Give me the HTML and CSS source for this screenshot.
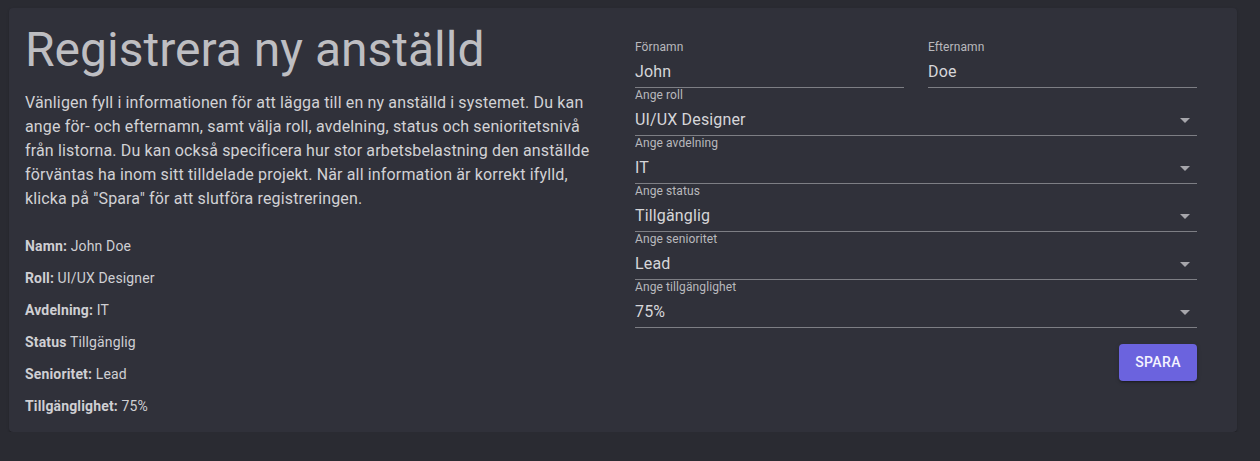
FILE: index.html
```html
<!DOCTYPE html>
<html lang="sv">
<head>
<meta charset="utf-8">
<title>Registrera ny anställd</title>
<link rel="stylesheet" href="styles.css">
</head>
<body>
<div class="card">
  <div class="col-left">
    <h1 class="title">Registrera ny anställd</h1>
    <p class="intro">Vänligen fyll i informationen för att lägga till en ny anställd i systemet. Du kan ange för- och efternamn, samt välja roll, avdelning, status och senioritetsnivå från listorna. Du kan också specificera hur stor arbetsbelastning den anställde förväntas ha inom sitt tilldelade projekt. När all information är korrekt ifylld, klicka på "Spara" för att slutföra registreringen.</p>
    <div class="details">
      <p class="detail"><b>Namn:</b> John Doe</p>
      <p class="detail"><b>Roll:</b> UI/UX Designer</p>
      <p class="detail"><b>Avdelning:</b> IT</p>
      <p class="detail"><b>Status</b> Tillgänglig</p>
      <p class="detail"><b>Senioritet:</b> Lead</p>
      <p class="detail"><b>Tillgänglighet:</b> 75%</p>
    </div>
  </div>
  <div class="col-right">
    <div class="name-row">
      <div class="field">
        <label class="label">Förnamn</label>
        <div class="input"><span class="value">John</span></div>
      </div>
      <div class="field">
        <label class="label">Efternamn</label>
        <div class="input"><span class="value">Doe</span></div>
      </div>
    </div>
    <div class="field">
      <label class="label">Ange roll</label>
      <div class="input select"><span class="value">UI/UX Designer</span><svg class="arrow" viewBox="0 0 24 24"><path d="M7 10l5 5 5-5z"/></svg></div>
    </div>
    <div class="field">
      <label class="label">Ange avdelning</label>
      <div class="input select"><span class="value">IT</span><svg class="arrow" viewBox="0 0 24 24"><path d="M7 10l5 5 5-5z"/></svg></div>
    </div>
    <div class="field">
      <label class="label">Ange status</label>
      <div class="input select"><span class="value">Tillgänglig</span><svg class="arrow" viewBox="0 0 24 24"><path d="M7 10l5 5 5-5z"/></svg></div>
    </div>
    <div class="field">
      <label class="label">Ange senioritet</label>
      <div class="input select"><span class="value">Lead</span><svg class="arrow" viewBox="0 0 24 24"><path d="M7 10l5 5 5-5z"/></svg></div>
    </div>
    <div class="field">
      <label class="label">Ange tillgänglighet</label>
      <div class="input select"><span class="value">75%</span><svg class="arrow" viewBox="0 0 24 24"><path d="M7 10l5 5 5-5z"/></svg></div>
    </div>
    <div class="actions">
      <button class="btn" type="button">Spara</button>
    </div>
  </div>
</div>
</body>
</html>
```

FILE: styles.css
```css
html, body {
  margin: 0;
  padding: 0;
  background: #2a2b32;
  font-family: Roboto, "Noto Sans", sans-serif;
}

.card {
  margin: 8px 0 0 9px;
  width: 1228px;
  box-sizing: border-box;
  padding: 16px 40px 16px 16px;
  background: #30313a;
  border-radius: 4px;
  box-shadow: 0 2px 1px -1px rgba(0,0,0,0.2), 0 1px 1px 0 rgba(0,0,0,0.14), 0 1px 3px 0 rgba(0,0,0,0.12);
  display: flex;
  gap: 24px;
}

.col-left {
  width: 586px;
  flex: none;
}

.col-right {
  flex: 1;
  padding-top: 16px;
}

.title {
  margin: -2px 0 13px;
  font-size: 48px;
  font-weight: 400;
  line-height: 56px;
  color: #bebec2;
  letter-spacing: 0;
  white-space: nowrap;
}

.intro {
  margin: 0;
  font-size: 16px;
  line-height: 24px;
  color: #d2d2d5;
  letter-spacing: 0.15px;
}

.details {
  margin-top: 25px;
}

.detail {
  margin: 12px 0 0;
  font-size: 14px;
  line-height: 20px;
  color: #cfcfd3;
  letter-spacing: 0.15px;
}

.detail b {
  font-weight: 700;
}

.name-row {
  display: flex;
  gap: 24px;
}

.name-row .field {
  flex: 1;
}

.field {
  height: 48px;
  display: flex;
  flex-direction: column;
}

.label {
  height: 16px;
  font-size: 12px;
  line-height: 14px;
  color: #b9b9bd;
  letter-spacing: 0.1px;
}

.input {
  position: relative;
  height: 32px;
  box-sizing: border-box;
  padding: 4px 0 5px;
  border-bottom: 1px solid #7d7e84;
  display: flex;
  align-items: center;
}

.value {
  font-size: 16px;
  line-height: 23px;
  color: #d6d6d9;
  letter-spacing: 0.15px;
}

.arrow {
  position: absolute;
  right: 0;
  top: 4px;
  width: 24px;
  height: 24px;
  fill: #a6a6ab;
}

.actions {
  display: flex;
  justify-content: flex-end;
  margin-top: 16px;
}

.btn {
  font-family: Roboto, "Noto Sans", sans-serif;
  font-size: 14px;
  font-weight: 500;
  line-height: 25px;
  letter-spacing: 0.4px;
  text-transform: uppercase;
  color: #f4f3ff;
  background: #6b63de;
  border: none;
  border-radius: 4px;
  padding: 6px 16px;
  min-width: 78px;
  height: 37px;
  box-shadow: 0 3px 1px -2px rgba(0,0,0,0.2), 0 2px 2px 0 rgba(0,0,0,0.14), 0 1px 5px 0 rgba(0,0,0,0.12);
  cursor: pointer;
}
```
